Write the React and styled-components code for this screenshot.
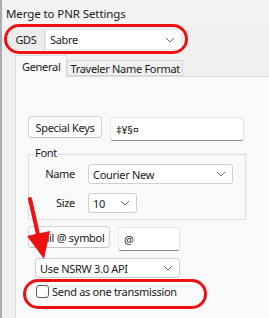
import React from "react";
import styled, { createGlobalStyle } from "styled-components";

const Global = createGlobalStyle`
  html, body { margin: 0; padding: 0; }
  body {
    font-family: "Noto Sans", "Open Sans", sans-serif;
    font-size: 11px;
    letter-spacing: -0.3px;
    color: #1a1a1a;
    background: #f0f0f0;
    white-space: nowrap;
  }
`;

const Win = styled.div`
  position: relative;
  width: 269px;
  height: 318px;
  overflow: hidden;
  background: #f0f0f0;
  border-left: 2px solid #a9adb3;
  box-sizing: border-box;
`;

const TitleBar = styled.div`
  height: 25px;
  display: flex;
  align-items: center;
  padding-left: 4px;
  padding-top: 1px;
  box-sizing: border-box;
  font-size: 11.5px;
  letter-spacing: -0.1px;
  background: #f3f3f3;
`;

const GdsRow = styled.div`
  display: flex;
  margin: 4px 0 0 6px;
  height: 21px;
`;

const GdsLabel = styled.div`
  width: 36px;
  display: flex;
  align-items: center;
  justify-content: center;
  background: #ececec;
  border-right: 1px solid #d6d6d6;
`;

const Select = styled.div`
  box-sizing: border-box;
  width: ${(p) => p.$w}px;
  height: ${(p) => p.$h || 21}px;
  background: #fff;
  border: 1px solid ${(p) => (p.$flat ? "#e9e9e9" : "#cfcfcf")};
  border-radius: ${(p) => (p.$flat ? 0 : 3)}px;
  display: flex;
  align-items: center;
  justify-content: space-between;
  padding: 0 6px 0 4px;
`;

const Chevron = () => (
  <svg width="10" height="6" viewBox="0 0 10 6">
    <path d="M1 1l4 4 4-4" fill="none" stroke="#6b6b6b" strokeWidth="1" />
  </svg>
);

const TabStrip = styled.div`
  display: flex;
  align-items: flex-end;
  margin: 5px 0 0 13px;
  height: 21px;
`;

const Tab = styled.div`
  box-sizing: border-box;
  height: ${(p) => (p.$active ? 22 : 16)}px;
  padding: 0 ${(p) => (p.$active ? 6 : 2)}px;
  display: flex;
  align-items: ${(p) => (p.$active ? "flex-start" : "center")};
  padding-top: ${(p) => (p.$active ? 3 : 0)}px;
  background: ${(p) => (p.$active ? "#f9f9f9" : "#f0f0f0")};
  border: 1px solid #dadada;
  border-bottom: ${(p) => (p.$active ? "none" : "1px solid #dadada")};
  margin-bottom: ${(p) => (p.$active ? -1 : 0)}px;
  position: relative;
  z-index: ${(p) => (p.$active ? 1 : 0)};
`;

const Panel = styled.div`
  margin-left: 13px;
  height: 260px;
  background: #f9f9f9;
  border-left: 1px solid #dadada;
  border-top: 1px solid #dadada;
  padding: 39px 0 0 12px;
  box-sizing: border-box;
`;

const Row = styled.div`
  display: flex;
  align-items: flex-start;
  gap: ${(p) => p.$gap || 8}px;
  margin-top: ${(p) => p.$mt || 0}px;
  margin-left: ${(p) => p.$ml || 0}px;
`;

const Button = styled.div`
  box-sizing: border-box;
  width: ${(p) => p.$w}px;
  height: 22px;
  background: #fdfdfd;
  border: 1px solid #d3d3d3;
  border-bottom-color: #c2c2c2;
  border-radius: 4px;
  display: flex;
  align-items: center;
  justify-content: center;
`;

const Input = styled.div`
  box-sizing: border-box;
  width: ${(p) => p.$w}px;
  height: 24px;
  background: #fff;
  border: 1px solid #e6e6e6;
  border-bottom: 1px solid #8a8a8a;
  border-radius: 3px;
  display: flex;
  align-items: center;
  padding-left: 5px;
  margin-top: 1px;
`;

const Group = styled.div`
  position: relative;
  box-sizing: border-box;
  width: 218px;
  height: 66px;
  margin-top: 13px;
  border: 1px solid #dcdcdc;
  padding-top: 9px;
`;

const GroupTitle = styled.span`
  position: absolute;
  top: -10px;
  left: 5px;
  background: #f9f9f9;
  padding: 0 1px;
`;

const FieldLabel = styled.span`
  width: 46px;
  text-align: right;
  line-height: 20px;
`;

const CheckRow = styled.div`
  display: flex;
  align-items: center;
  gap: 3px;
  margin: 6px 0 0 8px;
`;

const Box = styled.span`
  width: 11px;
  height: 11px;
  border: 1px solid #5c5c5c;
  border-radius: 3px;
  background: #fff;
`;

const Ring = styled.div`
  position: absolute;
  box-sizing: border-box;
  border: 3.5px solid #ee1111;
  border-radius: 15px;
  pointer-events: none;
`;

const Arrow = styled.svg`
  position: absolute;
  left: 20px;
  top: 196px;
`;

export default function App() {
  return (
    <>
      <Global />
      <Win>
        <TitleBar>Merge to PNR Settings</TitleBar>
        <GdsRow>
          <GdsLabel>GDS</GdsLabel>
          <Select $w={137} $flat>
            Sabre <Chevron />
          </Select>
        </GdsRow>
        <TabStrip>
          <Tab $active>General</Tab>
          <Tab>Traveler Name Format</Tab>
        </TabStrip>
        <Panel>
          <Row $gap={8}>
            <Button $w={74}>Special Keys</Button>
            <Input $w={134} style={{ fontSize: 11 }}>‡¥§¤</Input>
          </Row>
          <Group>
            <GroupTitle>Font</GroupTitle>
            <Row $gap={13}>
              <FieldLabel>Name</FieldLabel>
              <Select $w={145} $h={20}>
                Courier New <Chevron />
              </Select>
            </Row>
            <Row $gap={13} $mt={9}>
              <FieldLabel>Size</FieldLabel>
              <Select $w={49} $h={20}>
                10 <Chevron />
              </Select>
            </Row>
          </Group>
          <Row $gap={8} $mt={6}>
            <Button $w={82}>Mail @ symbol</Button>
            <Input $w={62}>@</Input>
          </Row>
          <Row $mt={7} $ml={7}>
            <Select $w={145} $h={20}>
              Use NSRW 3.0 API <Chevron />
            </Select>
          </Row>
          <CheckRow>
            <Box />
            <span>Send as one transmission</span>
          </CheckRow>
        </Panel>
        <Ring style={{ left: 21, top: 24 + 255, width: 184, height: 30 }} />
        <Ring style={{ left: 2, top: 24, width: 184, height: 30 }} />
        <Arrow width="36" height="66" viewBox="0 0 36 66">
          <path d="M8 3L17 43" stroke="#ee1111" strokeWidth="4" strokeLinecap="round" />
          <path d="M5 40L28 35L22 63Z" fill="#ee1111" />
        </Arrow>
      </Win>
    </>
  );
}
